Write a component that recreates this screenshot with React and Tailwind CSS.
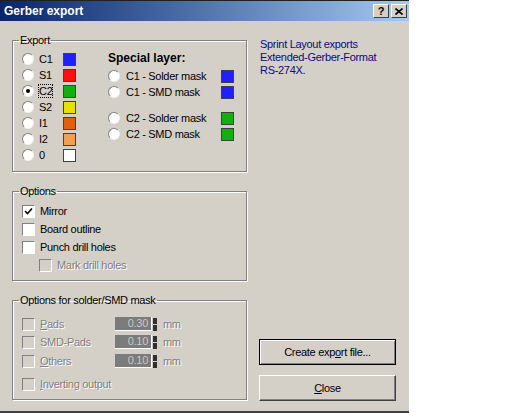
import React from "react";

const FONT = { fontFamily: '"Liberation Sans", Arial, sans-serif' };

const Group = ({ label, className = "", children }) => (
  <fieldset
    className={`border border-[#808080] shadow-[inset_1px_1px_0_#fff,1px_1px_0_#fff] ${className}`}
  >
    <legend className="ml-[6px] px-[1px] leading-[13px]">{label}</legend>
    {children}
  </fieldset>
);

const Radio = ({ checked }) => (
  <span className="w-[12px] h-[12px] rounded-full bg-white border border-t-[#808080] border-l-[#808080] border-b-[#f0f0f0] border-r-[#f0f0f0] flex items-center justify-center shrink-0">
    {checked && <span className="w-[4px] h-[4px] rounded-full bg-black" />}
  </span>
);

const Swatch = ({ color }) => (
  <span
    className={`w-[13px] h-[13px] border border-[#404040] shrink-0 ${color}`}
  />
);

const Check = ({ checked, disabled }) => (
  <span
    className={`w-[13px] h-[13px] border border-t-[#808080] border-l-[#808080] border-b-white border-r-white flex items-center justify-center shrink-0 ${
      disabled ? "bg-[#d4d0c8]" : "bg-white"
    }`}
  >
    {checked && (
      <svg width="9" height="9" viewBox="0 0 9 9">
        <path d="M1 4 L3.5 6.5 L8 1.5" stroke="#000" strokeWidth="1.6" fill="none" />
      </svg>
    )}
  </span>
);

const Dim = ({ children }) => (
  <span className="text-[#808080] [text-shadow:1px_1px_0_#fff]">{children}</span>
);

const LayerRow = ({ label, color, checked, focus }) => (
  <div className="h-[16px] flex items-center">
    <Radio checked={checked} />
    <span className="ml-[5px] w-[24px]">
      <span className={focus ? "outline outline-1 outline-dotted outline-black" : ""}>{label}</span>
    </span>
    <Swatch color={color} />
  </div>
);

const SpecialRow = ({ label, color }) => (
  <div className="h-[16px] flex items-center">
    <Radio />
    <span className="ml-[6px] w-[95px]">{label}</span>
    <Swatch color={color} />
  </div>
);

const MaskRow = ({ label, value, accel }) => (
  <div className="h-[18px] flex items-center">
    <Check disabled />
    <span className="ml-[5px] w-[75px]">
      <Dim>
        {accel ? (
          <>
            <u>{label[0]}</u>
            {label.slice(1)}
          </>
        ) : (
          label
        )}
      </Dim>
    </span>
    <span className="w-[37px] h-[14px] bg-[#7b7b7b] border-r border-b border-white text-right pr-[3px] leading-[13px] text-[#c8c8c8]">
      {value}
    </span>
    <span className="ml-[1px] w-[4px] h-[13px] flex flex-col gap-[1px]">
      <span className="flex-1 bg-[#303030]" />
      <span className="flex-1 bg-[#303030]" />
    </span>
    <span className="ml-[6px]">
      <Dim>mm</Dim>
    </span>
  </div>
);

export default function App() {
  return (
    <div className="w-[512px] h-[413px] bg-white" style={FONT}>
      <div className="w-[409px] h-[413px] bg-[#d4d0c8] border-b-2 border-[#404040] flex flex-col text-[11px] tracking-[-0.3px] text-black">
        {/* title bar */}
        <div className="h-[21px] shrink-0 bg-gradient-to-r from-[#0a246a] to-[#a6caf0] flex items-center pl-[4px] pr-[2px] border-t border-[#202020]">
          <span className="text-white font-bold text-[12px] tracking-normal">Gerber export</span>
          <div className="ml-auto flex gap-[2px]">
            <span className="w-[16px] h-[14px] bg-[#d4d0c8] border border-t-white border-l-white border-b-[#404040] border-r-[#404040] flex items-center justify-center font-bold text-[11px] leading-none">
              ?
            </span>
            <span className="w-[16px] h-[14px] bg-[#d4d0c8] border border-t-white border-l-white border-b-[#404040] border-r-[#404040] flex items-center justify-center">
              <svg width="8" height="7" viewBox="0 0 8 7">
                <path d="M0.5 0.5 L7.5 6.5 M7.5 0.5 L0.5 6.5" stroke="#000" strokeWidth="1.6" />
              </svg>
            </span>
          </div>
        </div>

        <div className="flex flex-1">
          {/* left column */}
          <div className="ml-[12px] w-[235px] pt-[13px] flex flex-col">
            <Group label="Export">
              <div className="pl-[9px] pt-[4px] pb-[8px] flex">
                <div className="flex flex-col">
                  <LayerRow label="C1" color="bg-[#1f1fff]" />
                  <LayerRow label="S1" color="bg-[#ff1010]" />
                  <LayerRow label="C2" color="bg-[#10b010]" checked focus />
                  <LayerRow label="S2" color="bg-[#e8e000]" />
                  <LayerRow label="I1" color="bg-[#e06010]" />
                  <LayerRow label="I2" color="bg-[#f0a050]" />
                  <LayerRow label="0" color="bg-white" />
                </div>
                <div className="ml-[32px] flex flex-col -mt-[1px]">
                  <div className="h-[16px] flex items-center font-bold text-[12px] tracking-normal">
                    Special layer:
                  </div>
                  <div className="mt-[2px]">
                    <SpecialRow label="C1 - Solder mask" color="bg-[#1f1fff]" />
                    <SpecialRow label="C1 - SMD mask" color="bg-[#1f1fff]" />
                  </div>
                  <div className="mt-[10px]">
                    <SpecialRow label="C2 - Solder mask" color="bg-[#10b010]" />
                    <SpecialRow label="C2 - SMD mask" color="bg-[#10b010]" />
                  </div>
                </div>
              </div>
            </Group>

            <Group label="Options" className="mt-[13px]">
              <div className="pl-[9px] pt-[4px] pb-[6px] flex flex-col">
                <div className="h-[18px] flex items-center">
                  <Check checked />
                  <span className="ml-[5px]">Mirror</span>
                </div>
                <div className="h-[18px] flex items-center">
                  <Check />
                  <span className="ml-[5px]">Board outline</span>
                </div>
                <div className="h-[18px] flex items-center">
                  <Check />
                  <span className="ml-[5px]">Punch drill holes</span>
                </div>
                <div className="h-[18px] flex items-center pl-[17px]">
                  <Check disabled />
                  <span className="ml-[5px]">
                    <Dim>Mark drill holes</Dim>
                  </span>
                </div>
              </div>
            </Group>

            <Group label="Options for solder/SMD mask" className="mt-[13px]">
              <div className="pl-[9px] pt-[8px] pb-[6px] flex flex-col">
                <MaskRow label="Pads" value="0.30" accel />
                <MaskRow label="SMD-Pads" value="0.10" />
                <div className="mt-[1px]">
                  <MaskRow label="Others" value="0.10" accel />
                </div>
                <div className="h-[18px] mt-[5px] flex items-center">
                  <Check disabled />
                  <span className="ml-[5px]">
                    <Dim>
                      <u>I</u>nverting output
                    </Dim>
                  </span>
                </div>
              </div>
            </Group>
          </div>

          {/* right column */}
          <div className="ml-[12px] w-[137px] pt-[17px] pb-[10px] flex flex-col">
            <div className="pl-[1px] leading-[13px] text-[#0a0a80]">
              Sprint Layout exports
              <br />
              Extended-Gerber-Format
              <br />
              RS-274X.
            </div>
            <div className="mt-auto flex flex-col gap-[10px]">
              <button className="h-[26px] bg-[#d4d0c8] border border-black shadow-[inset_1px_1px_0_#fff,inset_-1px_-1px_0_#808080]">
                Create exp<u>o</u>rt file...
              </button>
              <button className="h-[26px] bg-[#d4d0c8] border border-t-white border-l-white border-b-[#404040] border-r-[#404040] shadow-[inset_-1px_-1px_0_#808080]">
                <u>C</u>lose
              </button>
            </div>
          </div>
        </div>
      </div>
    </div>
  );
}
